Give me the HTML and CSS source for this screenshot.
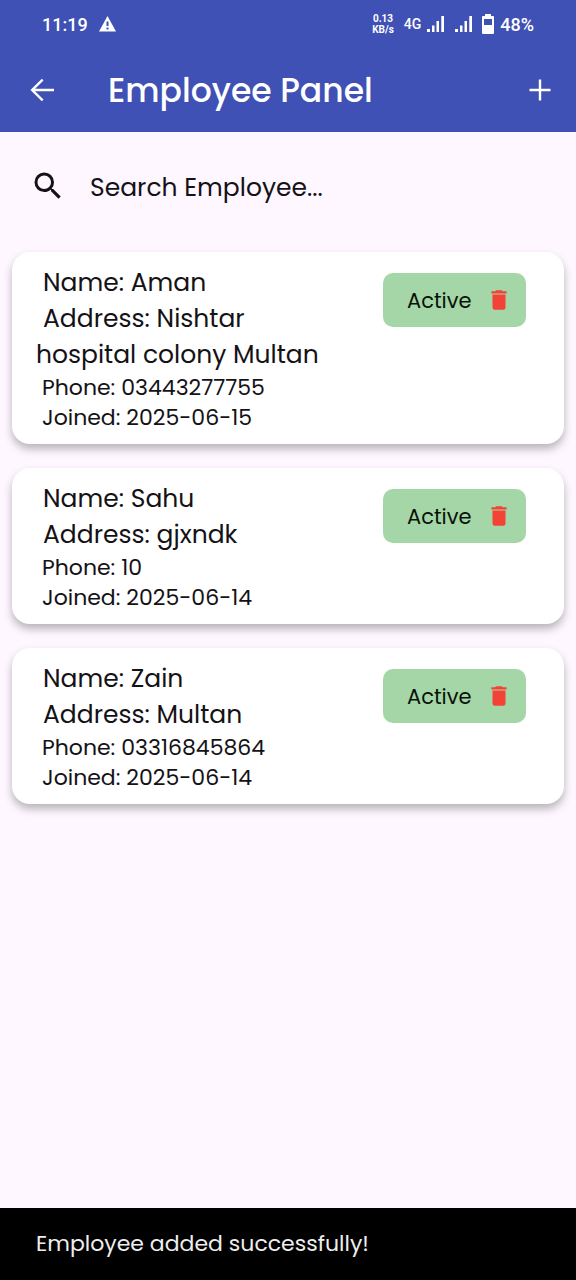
FILE: index.html
```html
<!DOCTYPE html>
<html lang="en">
<head>
<meta charset="utf-8">
<meta name="viewport" content="width=device-width, initial-scale=1">
<title>Employee Panel</title>
<link rel="stylesheet" href="styles.css">
</head>
<body>
<div class="status-bar">
  <div class="status-group">
    <span class="status-text">11:19</span>
    <svg class="warning-icon" viewBox="0 0 17 16" aria-hidden="true"><path d="M8.500 0 17 15.500H0Z" fill="currentColor"/><path d="M8.500 5.500v4.500M8.500 11.500v2" stroke="#3f51b5" stroke-width="2"/></svg>
  </div>
  <div class="status-group status-right">
    <span class="speed"><span>0.13</span><span>KB/s</span></span>
    <span class="network">4G</span>
    <svg class="signal-icon" viewBox="0 0 17 16" aria-hidden="true"><path d="M0 13h3v3H0zM5 9.500h2.500V16H5zM9.500 5H12v11H9.500zM14.300 0H17v16h-2.700z" fill="currentColor"/></svg>
    <svg class="signal-icon signal-second" viewBox="0 0 17 16" aria-hidden="true"><path d="M0 13h3v3H0zM5 9.500h2.500V16H5zM9.500 5H12v11H9.500zM14.300 0H17v16h-2.700z" fill="currentColor"/></svg>
    <svg class="battery-icon" viewBox="0 0 12 20" aria-hidden="true"><path fill-rule="evenodd" d="M3 0h6v2h2q1 0 1 1v16q0 1-1 1H1q-1 0-1-1V3q0-1 1-1h2zM2 5v6h8V5z" fill="currentColor"/></svg>
    <span class="status-text">48%</span>
  </div>
</div>
<header class="app-bar">
  <button class="icon-button" type="button" aria-label="Back">
    <svg class="icon-large" viewBox="0 0 24 24" aria-hidden="true"><path d="M20 11.200H7.400l5.600-5.600L11.900 4.500 4.300 12l7.600 7.500 1.100-1.100-5.600-5.600H20z" fill="currentColor"/></svg>
  </button>
  <h1 class="title">Employee Panel</h1>
  <button class="icon-button" type="button" aria-label="Add employee">
    <svg class="icon-large" viewBox="0 0 24 24" aria-hidden="true"><path d="M19 12.800h-6.200V19h-1.600v-6.200H5v-1.600h6.200V5h1.600v6.200H19z" fill="currentColor"/></svg>
  </button>
</header>
<main class="content">
  <label class="search">
    <svg class="icon-large" viewBox="0 0 24 24" aria-hidden="true"><path d="M15.500 14h-.79l-.28-.27A6.470 6.470 0 0 0 16 9.500 6.500 6.500 0 1 0 9.500 16c1.610 0 3.090-.59 4.230-1.570l.27.28v.79l5 4.990L20.490 19zm-6 0C7.010 14 5 11.990 5 9.500S7.010 5 9.500 5 14 7.010 14 9.500 11.990 14 9.500 14z" fill="currentColor"/></svg>
    <input class="search-input" type="text" placeholder="Search Employee..." aria-label="Search Employee">
  </label>
  <article class="card">
    <div class="details">
      <p class="primary">Name: Aman</p>
      <p class="primary">Address: Nishtar hospital colony Multan</p>
      <p class="secondary">Phone: 03443277755</p>
      <p class="secondary">Joined: 2025-06-15</p>
    </div>
    <div class="chip">
      <span>Active</span>
      <button class="delete" type="button" aria-label="Delete Aman"><svg class="trash-icon" viewBox="0 0 24 24" aria-hidden="true"><path d="M6 19c0 1.100.9 2 2 2h8c1.100 0 2-.9 2-2V7H6zM19 4h-3.500l-1-1h-5l-1 1H5v2h14z" fill="currentColor"/></svg></button>
    </div>
  </article>
  <article class="card">
    <div class="details">
      <p class="primary">Name: Sahu</p>
      <p class="primary">Address: gjxndk</p>
      <p class="secondary">Phone: 10</p>
      <p class="secondary">Joined: 2025-06-14</p>
    </div>
    <div class="chip">
      <span>Active</span>
      <button class="delete" type="button" aria-label="Delete Sahu"><svg class="trash-icon" viewBox="0 0 24 24" aria-hidden="true"><path d="M6 19c0 1.100.9 2 2 2h8c1.100 0 2-.9 2-2V7H6zM19 4h-3.500l-1-1h-5l-1 1H5v2h14z" fill="currentColor"/></svg></button>
    </div>
  </article>
  <article class="card">
    <div class="details">
      <p class="primary">Name: Zain</p>
      <p class="primary">Address: Multan</p>
      <p class="secondary">Phone: 03316845864</p>
      <p class="secondary">Joined: 2025-06-14</p>
    </div>
    <div class="chip">
      <span>Active</span>
      <button class="delete" type="button" aria-label="Delete Zain"><svg class="trash-icon" viewBox="0 0 24 24" aria-hidden="true"><path d="M6 19c0 1.100.9 2 2 2h8c1.100 0 2-.9 2-2V7H6zM19 4h-3.500l-1-1h-5l-1 1H5v2h14z" fill="currentColor"/></svg></button>
    </div>
  </article>
</main>
<div class="snackbar" role="status">Employee added successfully!</div>
</body>
</html>
```
FILE: styles.css
```css
* {
  box-sizing: border-box;
}

body {
  margin: 0;
  min-height: 100vh;
  display: flex;
  flex-direction: column;
  background: #fef7ff;
  color: #141216;
  font-family: Poppins, Inter, sans-serif;
}

button {
  border: 0;
  padding: 0;
  background: none;
  color: inherit;
  display: flex;
}

.status-bar {
  display: flex;
  justify-content: space-between;
  align-items: center;
  height: 48px;
  padding: 0 42px;
  background: #3f51b5;
  color: #fff;
  font-family: Roboto, sans-serif;
}

.status-group {
  display: flex;
  align-items: center;
  gap: 11px;
}

.status-right {
  gap: 6px;
}

.status-text {
  font-size: 18px;
  font-weight: 500;
}

.warning-icon {
  width: 17px;
  height: 16px;
}

.speed {
  display: flex;
  flex-direction: column;
  align-items: center;
  margin-right: 4px;
  font-size: 10px;
  line-height: 11px;
  font-weight: 700;
}

.network {
  font-size: 14px;
  font-weight: 500;
}

.signal-icon {
  width: 17px;
  height: 16px;
}

.signal-second {
  margin: 0 4px 0 5px;
}

.battery-icon {
  width: 12px;
  height: 20px;
}

.app-bar {
  display: flex;
  align-items: center;
  height: 84px;
  padding: 0 18px 0 24px;
  background: #3f51b5;
  color: #fff;
}

.icon-large {
  flex: none;
  width: 36px;
  height: 36px;
}

.title {
  flex: 1;
  margin: 0 0 0 48px;
  padding-top: 2px;
  font-size: 33px;
  line-height: 48px;
  font-weight: 500;
}

.content {
  flex: 1;
  display: flex;
  flex-direction: column;
  gap: 24px;
  padding: 12px;
}

.search {
  display: flex;
  align-items: center;
  gap: 24px;
  height: 84px;
  padding: 0 18px;
  border-radius: 18px;
}

.search-input {
  flex: 1;
  min-width: 0;
  border: 0;
  padding: 4px 0 0;
  outline: 0;
  background: none;
  color: inherit;
  font: inherit;
  font-size: 25px;
}

.search-input::placeholder {
  color: inherit;
  opacity: 1;
}

.card {
  display: flex;
  justify-content: space-between;
  align-items: flex-start;
  gap: 36px;
  padding: 13px 38px 11px 24px;
  border-radius: 18px;
  background: #fff;
  box-shadow: 0 5px 9px rgba(0, 0, 0, 0.28);
}

.details {
  flex: 0 1 300px;
}

.details p {
  margin: 0;
  text-indent: 7px;
}

.primary {
  font-size: 25px;
  line-height: 36px;
}

.details .secondary {
  font-size: 22px;
  line-height: 30px;
  text-indent: 6px;
}

.chip {
  display: flex;
  align-items: center;
  justify-content: space-between;
  flex: none;
  width: 143px;
  height: 54px;
  margin-top: 8px;
  padding: 0 14px 0 24px;
  border-radius: 10px;
  background: #a5d6a7;
  font-size: 21px;
  color: #081208;
}

.trash-icon {
  width: 26px;
  height: 26px;
  color: #f44336;
}

.snackbar {
  padding: 18px 36px;
  background: #000;
  color: #eee;
  font-size: 22px;
  line-height: 36px;
}
```
